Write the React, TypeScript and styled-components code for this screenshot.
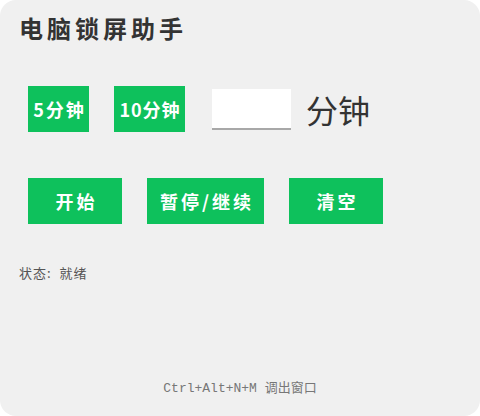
import styled, { createGlobalStyle } from 'styled-components';

const GlobalStyle = createGlobalStyle`
  html, body {
    margin: 0;
    padding: 0;
    background: #ffffff;
  }
  * {
    box-sizing: border-box;
  }
`;

const Window = styled.div`
  width: 480px;
  height: 416px;
  background: #f0f0f0;
  border-radius: 16px;
  display: flex;
  flex-direction: column;
  padding: 12px 19px 0;
  font-family: 'Noto Sans CJK SC', 'Liberation Sans', sans-serif;
  overflow: hidden;
`;

const Title = styled.h1`
  margin: 0;
  font-size: 24px;
  font-weight: 700;
  line-height: 32px;
  color: #333333;
  letter-spacing: 4px;
`;

const Row = styled.div<{ $top: number }>`
  display: flex;
  align-items: center;
  gap: 25px;
  margin-top: ${(p) => p.$top}px;
  padding-left: 9px;
`;

const GreenButton = styled.button<{ $w: number; $spacing: number }>`
  width: ${(p) => p.$w}px;
  height: 46px;
  border: none;
  padding: 0 0 0 ${(p) => p.$spacing}px;
  background: #0ec15c;
  color: #ffffff;
  font-family: 'Noto Sans CJK SC', 'Liberation Sans', sans-serif;
  font-size: 18px;
  font-weight: 700;
  letter-spacing: ${(p) => p.$spacing}px;
  cursor: pointer;
`;

const MinuteGroup = styled.div`
  display: flex;
  align-items: center;
  gap: 15px;
  margin-left: 2px;
`;

const MinuteInput = styled.input`
  width: 79px;
  height: 41px;
  border: none;
  border-bottom: 2px solid #a8a8a8;
  background: #ffffff;
  font-size: 16px;
  outline: none;
`;

const MinuteLabel = styled.span`
  font-size: 32px;
  color: #333333;
  line-height: 40px;
`;

const Status = styled.div`
  margin-top: 40px;
  font-size: 13px;
  color: #555555;
  line-height: 18px;
  letter-spacing: 1px;
  white-space: pre;
`;

const Footer = styled.div`
  margin-top: auto;
  margin-bottom: 20px;
  text-align: center;
  font-family: 'Liberation Mono', 'Noto Sans CJK SC', monospace;
  font-size: 13px;
  color: #777777;
`;

export default function App() {
  return (
    <>
      <GlobalStyle />
      <Window>
        <Title>电脑锁屏助手</Title>
        <Row $top={42}>
          <GreenButton $w={61} $spacing={2}>5分钟</GreenButton>
          <GreenButton $w={71} $spacing={1}>10分钟</GreenButton>
          <MinuteGroup>
            <MinuteInput type="text" />
            <MinuteLabel>分钟</MinuteLabel>
          </MinuteGroup>
        </Row>
        <Row $top={46}>
          <GreenButton $w={94} $spacing={3}>开始</GreenButton>
          <GreenButton $w={117} $spacing={3}>暂停/继续</GreenButton>
          <GreenButton $w={94} $spacing={3}>清空</GreenButton>
        </Row>
        <Status>{'状态:  就绪'}</Status>
        <Footer>Ctrl+Alt+N+M 调出窗口</Footer>
      </Window>
    </>
  );
}
